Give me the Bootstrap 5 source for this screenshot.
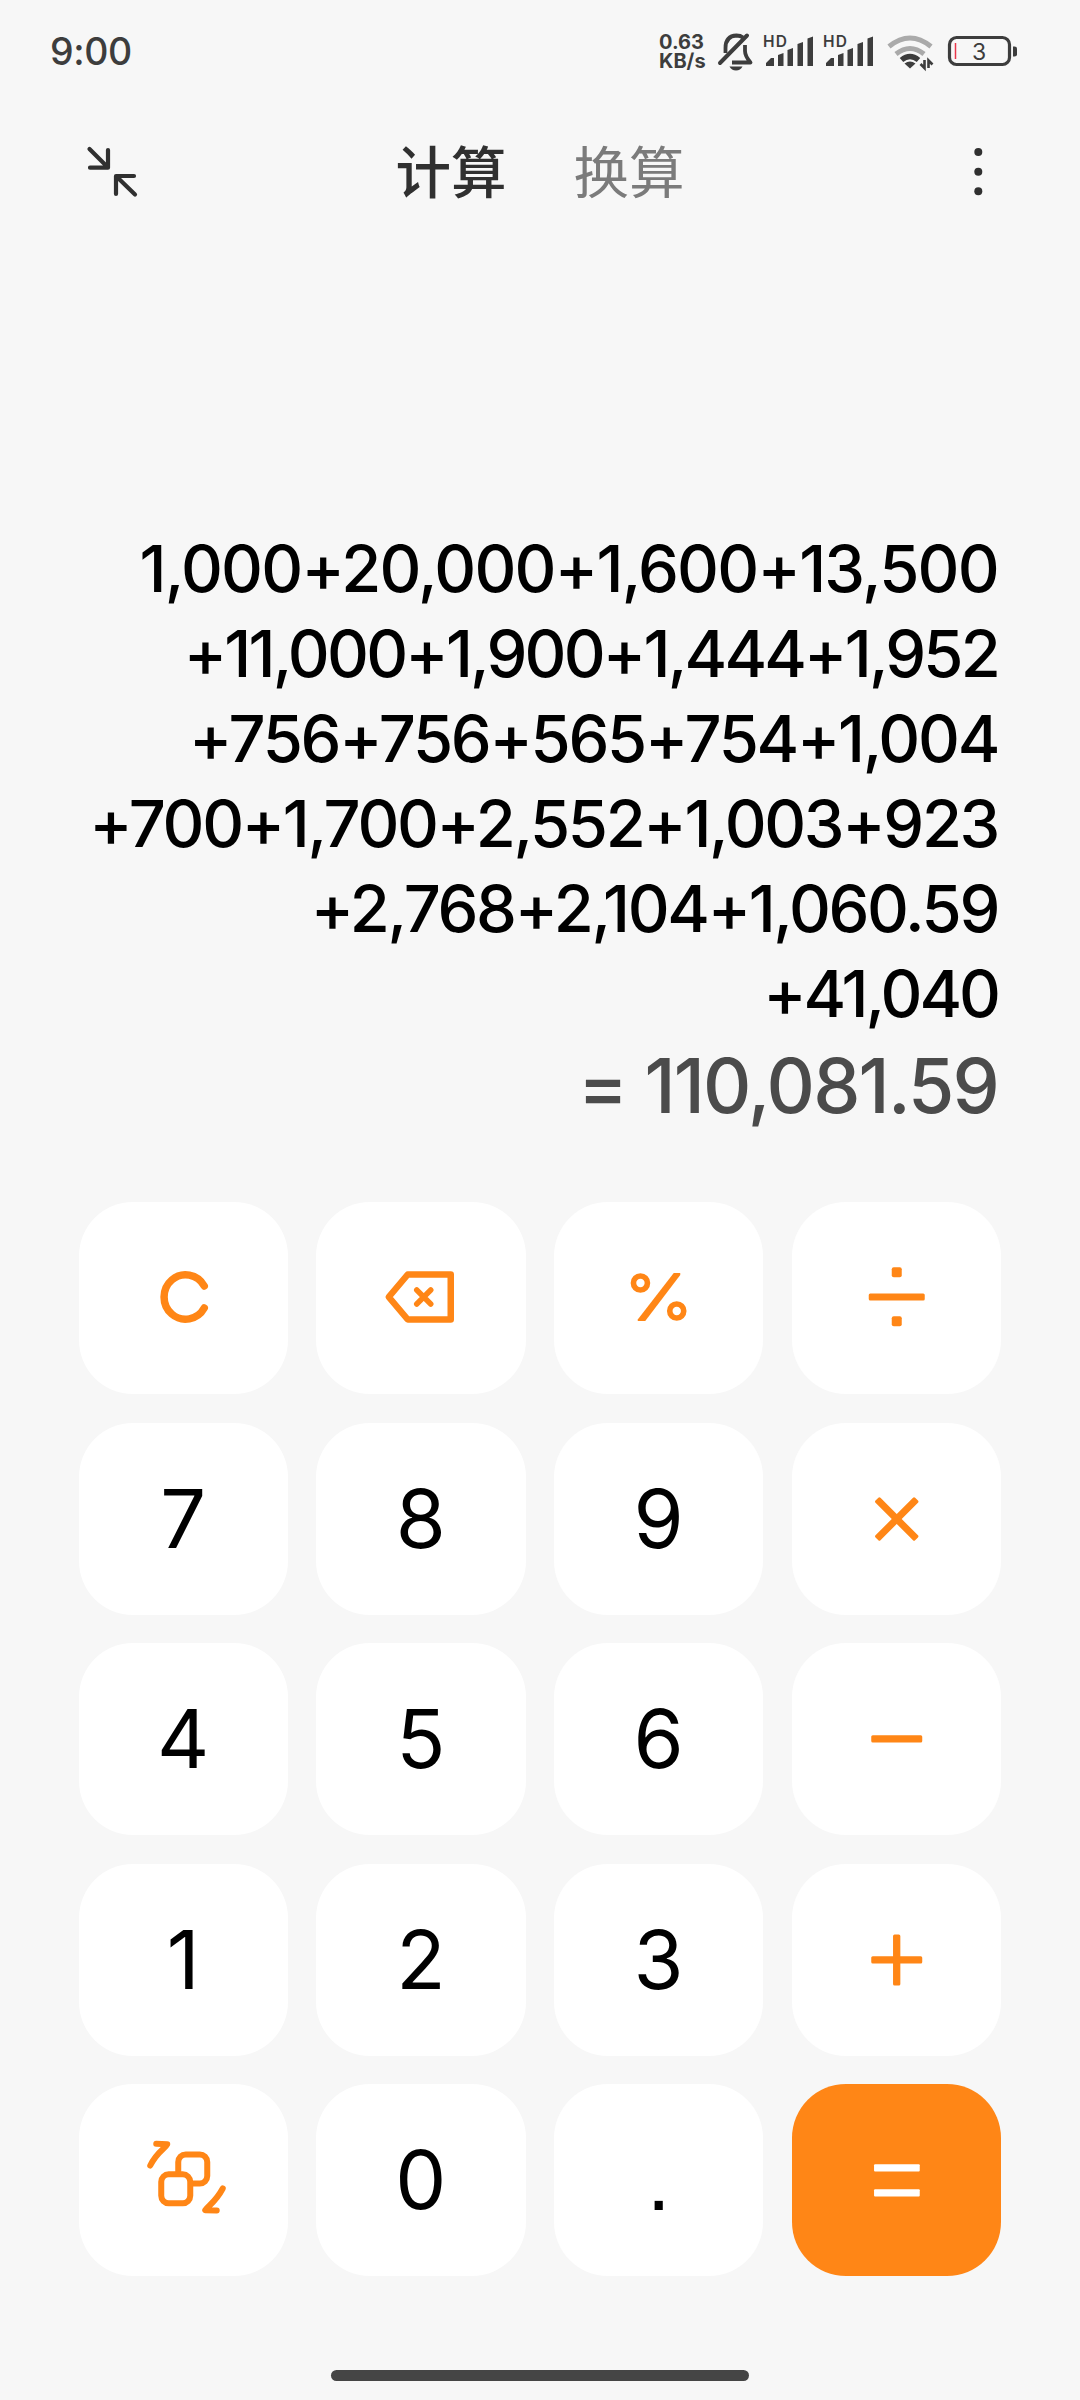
<!DOCTYPE html>
<html lang="zh-CN">
<head>
<meta charset="utf-8">
<meta name="viewport" content="width=device-width, initial-scale=1">
<title>计算器</title>
<link href="https://cdn.jsdelivr.net/npm/bootstrap@5.3.0/dist/css/bootstrap.min.css" rel="stylesheet">
<style>
:root{--accent:#ff8616;--ink:#3d3d3d}
body{width:1080px;height:2400px;background:#f7f7f7;font-family:Inter,"Noto Sans CJK SC",sans-serif;overflow:hidden}
svg{display:block;flex:none}
.status-bar{height:104px;padding:0 62px 0 50px;color:var(--ink)}
.clock{font-size:37.5px;font-weight:500;letter-spacing:-.4px;line-height:102px}
.net-speed{font-size:20px;font-weight:700;line-height:19px;width:49px}
.title-bar{height:130px;padding:0 82px}
.title-tabs{gap:67px;font-family:"Noto Sans CJK SC",sans-serif;font-size:55.5px;font-weight:500;line-height:80px}
.title-tabs a{color:#303030;text-decoration:none}
.title-tabs a.idle{color:#7b7b7b;font-weight:400}
.title-bar svg{margin-top:6px}
.display-area{height:968px;padding:0 82px 66px}
.expr{font-size:65px;font-weight:500;line-height:85px;color:#000;white-space:nowrap}
.e1{letter-spacing:-1.75px}.e2{letter-spacing:-2.8px}.e3{letter-spacing:-2.3px}
.e4{letter-spacing:-2.35px}.e5{letter-spacing:-2.35px}.e6{letter-spacing:-3px}
.total{font-size:75px;font-weight:500;line-height:100px;letter-spacing:-1.8px;color:#4b4b4b;white-space:nowrap}
.pad{padding:0 79px 0 78.5px;height:1103px}
.pad .row{--bs-gutter-x:28.2px;--bs-gutter-y:28.6px}
.key{height:192px;border-radius:54px;background:#fff;border:0;padding:0;color:#000;font-size:81px;font-weight:400;line-height:192px}
.key-eq{background:var(--accent)}
.key svg{width:100%;height:192px}
.dot-key{font-family:"Liberation Sans",sans-serif;font-size:86px}
.home-bar{width:418px;height:11px;border-radius:6px;background:#454545;margin-top:65px}
</style>
</head>
<body class="d-flex flex-column">
<header class="status-bar d-flex align-items-center">
  <div class="clock me-auto">9:00</div>
  <div class="net-speed">0.63<br>KB/s</div>
  <svg width="310" height="52" viewBox="708 26 310 52" fill="none" stroke="#3d3d3d">
    <path d="M725.500 53v-5q0-12 11-12.500q4 0 6.500 2M745 45v6q0 5 5.500 11.500H732" stroke-width="3.800" stroke-linejoin="round"/>
    <path d="M720 63L747 35.500" stroke-width="4" stroke-linecap="round"/>
    <path d="M729.500 66.500h13q-2 4-6.500 4t-6.500-4z" fill="#3d3d3d" stroke="none"/>
    <g id="sig" fill="#3d3d3d" stroke="none">
      <text x="763" y="47" font-size="15.500" font-weight="600" textLength="24">HD</text>
      <path d="M766 66v-3l5-5h3v8zM778 66V55l5.500-2v13zM787.500 66V50l5.500-2v18zM797.500 66V44l5.500-2v24zM807.500 66V38.500l5.500-2V66z"/>
    </g>
    <use href="#sig" x="60"/>
    <path d="M889 46.500q21-17 42 0M896 54q14-11 28 0" stroke="#aaa" stroke-width="5"/>
    <path d="M901.500 60q8.500-7 17 0" stroke-width="5.500"/>
    <path d="M904.500 63.500q5.500-4 11 0l-5.500 5z" fill="#3d3d3d" stroke="none"/>
    <path d="M924.500 60v8l-4-4M928.500 68v-7.500l4 4" stroke-width="2.600"/>
    <rect x="949.500" y="37.500" width="60" height="27" rx="7" stroke-width="3.200"/>
    <path d="M1013 46.500h1.500q2.500 0 2.500 2v6q0 2-2.500 2H1013z" fill="#3d3d3d" stroke="none"/>
    <path d="M955.500 43v16" stroke="#e8364a" stroke-width="1.500"/>
    <text x="972" y="60" font-size="23" fill="#3d3d3d" stroke="none">3</text>
  </svg>
</header>

<nav class="title-bar d-flex align-items-center justify-content-between">
  <svg width="58" height="58" viewBox="82 143 58 58" fill="none" stroke="#303030" stroke-width="4.200" stroke-linecap="round" stroke-linejoin="round"><path d="M89.500 149L107 166.500M108 150v17.700H90M135 194.500L117 177M134 176h-18v18"/></svg>
  <div class="title-tabs d-flex"><a href="#">计算</a><a href="#" class="idle">换算</a></div>
  <svg width="58" height="58" viewBox="940 143 58 58" fill="#303030"><circle cx="978.300" cy="152" r="4"/><circle cx="978.300" cy="171.700" r="4"/><circle cx="978.300" cy="191.300" r="4"/></svg>
</nav>

<main class="display-area d-flex flex-column justify-content-end align-items-end">
  <div class="expr e1">1,000+20,000+1,600+13,500</div>
  <div class="expr e2">+11,000+1,900+1,444+1,952</div>
  <div class="expr e3">+756+756+565+754+1,004</div>
  <div class="expr e4">+700+1,700+2,552+1,003+923</div>
  <div class="expr e5">+2,768+2,104+1,060.59</div>
  <div class="expr e6">+41,040</div>
  <div class="total">= 110,081.59</div>
</main>

<section class="pad">
  <div class="row row-cols-4">
    <div class="col"><button class="key w-100 d-block" aria-label="C"><svg viewBox="79 1202 209 192" fill="none" stroke="#ff8616" stroke-width="7.500" stroke-linecap="round"><path d="M204 1286A21.500 22.200 0 1 0 204 1308"/></svg></button></div>
    <div class="col"><button class="key w-100 d-block"><svg viewBox="316 1202 209 192" fill="none" stroke="#ff8616" stroke-width="6.500" stroke-linecap="round" stroke-linejoin="round"><path d="M388.500 1297L407.500 1274.500H450.500V1319.500H407.500Z"/><path d="M416.500 1290l14 14m0-14l-14 14" stroke-width="5.500"/></svg></button></div>
    <div class="col"><button class="key w-100 d-block"><svg viewBox="553.500 1202 209 192" fill="none" stroke="#ff8616" stroke-width="5.600"><circle cx="639.700" cy="1283" r="7"/><circle cx="676" cy="1311" r="7"/><path d="M673 1273h6.500v2L644.500 1321h-7.500v-1.500z" fill="#ff8616" stroke="none"/></svg></button></div>
    <div class="col"><button class="key w-100 d-block"><svg viewBox="791.500 1202 209 192" fill="#ff8616"><rect x="891" y="1267.300" width="10" height="10" rx="2"/><rect x="891" y="1316.300" width="10" height="10" rx="2"/><rect x="868" y="1293.500" width="56" height="7" rx="1.500"/></svg></button></div>
    <div class="col"><button class="key w-100 d-block">7</button></div>
    <div class="col"><button class="key w-100 d-block">8</button></div>
    <div class="col"><button class="key w-100 d-block">9</button></div>
    <div class="col"><button class="key w-100 d-block"><svg viewBox="791.500 1422 209 192" fill="#ff8616"><g transform="rotate(45 896 1518)"><rect x="868" y="1514.500" width="56" height="7" rx="1.500"/><rect x="892.500" y="1490" width="7" height="56" rx="1.500"/></g></svg></button></div>
    <div class="col"><button class="key w-100 d-block">4</button></div>
    <div class="col"><button class="key w-100 d-block">5</button></div>
    <div class="col"><button class="key w-100 d-block">6</button></div>
    <div class="col"><button class="key w-100 d-block"><svg viewBox="791.500 1643 209 192" fill="#ff8616"><rect x="870.500" y="1735.300" width="51" height="7.300" rx="1.500"/></svg></button></div>
    <div class="col"><button class="key w-100 d-block">1</button></div>
    <div class="col"><button class="key w-100 d-block">2</button></div>
    <div class="col"><button class="key w-100 d-block">3</button></div>
    <div class="col"><button class="key w-100 d-block"><svg viewBox="791.500 1864 209 192" fill="#ff8616"><rect x="870.500" y="1956.300" width="51" height="7.300" rx="1.500"/><rect x="892.300" y="1934.500" width="7.300" height="51" rx="1.500"/></svg></button></div>
    <div class="col"><button class="key w-100 d-block"><svg viewBox="79 2084.500 209 192" fill="none" stroke="#ff8616" stroke-width="6" stroke-linecap="round" stroke-linejoin="round"><rect x="178" y="2155" width="29" height="29" rx="7.500"/><rect x="161" y="2174.800" width="29" height="29" rx="7.500" fill="#fff"/><path d="M156 2144.300L167 2144.700C165 2149 157 2152 150 2166M222.500 2189C215 2203 208 2206 205 2210.700L216.500 2211"/></svg></button></div>
    <div class="col"><button class="key w-100 d-block">0</button></div>
    <div class="col"><button class="key w-100 d-block dot-key">.</button></div>
    <div class="col"><button class="key key-eq w-100 d-block"><svg viewBox="791.500 2084.500 209 192" fill="#fff"><rect x="873.300" y="2164.700" width="45.700" height="7.300" rx="1"/><rect x="873.300" y="2189.700" width="45.700" height="7.300" rx="1"/></svg></button></div>
  </div>
</section>
<div class="home-bar mx-auto"></div>
<script src="https://cdn.jsdelivr.net/npm/bootstrap@5.3.0/dist/js/bootstrap.bundle.min.js"></script>
</body>
</html>
